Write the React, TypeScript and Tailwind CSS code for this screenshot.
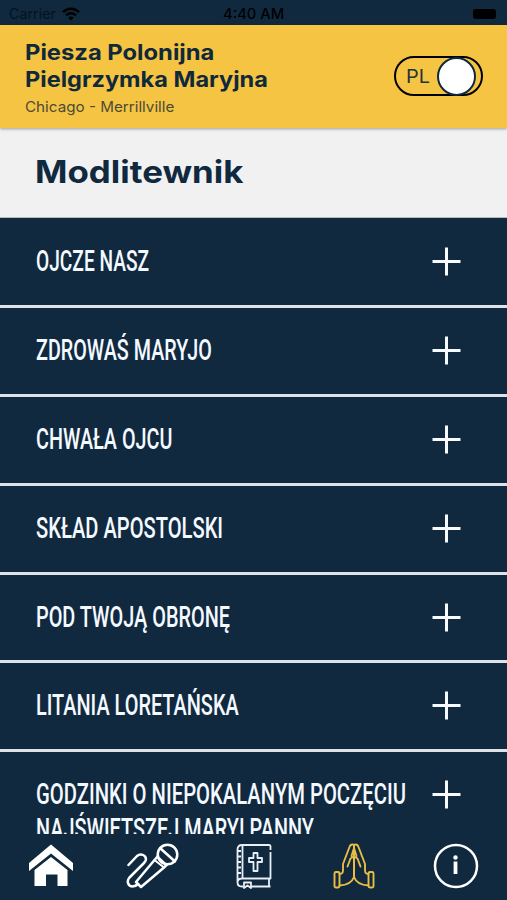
import { useLayoutEffect, useRef, useState } from "react";

type FitTextProps = { text: string; width: number; className?: string };

/** Single line of text whose glyphs are condensed or expanded to a given width. */
function FitText({ text, width, className = "" }: FitTextProps) {
  const ref = useRef<HTMLSpanElement>(null);
  const [scale, setScale] = useState(1);
  useLayoutEffect(() => {
    if (ref.current) setScale(width / ref.current.offsetWidth);
  }, [text, width]);
  return (
    <span className={`block ${className}`} style={{ width }}>
      <span
        ref={ref}
        className="inline-block origin-left whitespace-nowrap"
        style={{ transform: `scaleX(${scale})` }}
      >
        {text}
      </span>
    </span>
  );
}

type Line = { text: string; width: number };

const prayers: Line[][] = [
  [{ text: "OJCZE NASZ", width: 113 }],
  [{ text: "ZDROWAŚ MARYJO", width: 176 }],
  [{ text: "CHWAŁA OJCU", width: 136 }],
  [{ text: "SKŁAD APOSTOLSKI", width: 187 }],
  [{ text: "POD TWOJĄ OBRONĘ", width: 194 }],
  [{ text: "LITANIA LORETAŃSKA", width: 203 }],
  [
    { text: "GODZINKI O NIEPOKALANYM POCZĘCIU", width: 370 },
    { text: "NAJŚWIĘTSZEJ MARYI PANNY", width: 278 },
  ],
];

function StatusBar() {
  return (
    <div className="grid h-[25px] shrink-0 grid-cols-3 items-center bg-[#10293f] pt-[3px] pr-[9px] pl-[9px] text-black">
      <div className="flex items-center gap-[6px]">
        <FitText text="Carrier" width={47} className="text-[14px] leading-5 text-[#06111b]" />
        <svg width="18" height="14" viewBox="0 0 18 14" fill="none" stroke="#000" strokeWidth="2.5">
          <path d="M1 5.2C5.5.6 12.500.6 17 5.200" />
          <path d="M4 8.300C6.800 5.500 11.200 5.500 14 8.300" />
          <path d="M9 13.500 6.200 10.700C7.800 9.200 10.200 9.200 11.800 10.700Z" fill="#000" stroke="none" />
        </svg>
      </div>
      <div className="flex justify-center">
        <FitText text="4:40 AM" width={61} className="text-[14px] leading-5 font-medium" />
      </div>
      <div className="flex justify-end">
        <div className="mr-[2px] h-[10px] w-[23px] rounded-[3px] bg-black" />
      </div>
    </div>
  );
}

function LanguageSwitch() {
  return (
    <div className="mt-[31px] flex h-[40px] w-[89px] items-center justify-between rounded-full border-[2.5px] border-black pr-[5px] pl-[10px]">
      <FitText text="PL" width={24} className="pt-[2px] text-[19px] leading-6 text-[#243338]" />
      <div className="h-[39px] w-[39px] shrink-0 rounded-full border-2 border-[#10293f] bg-white" />
    </div>
  );
}

function Plus() {
  return (
    <svg className="mt-[28px] shrink-0" width="29" height="29" viewBox="0 0 29 29" stroke="#f7fbff" strokeWidth="3">
      <path d="M14.500.5v28M.5 14.500h28" />
    </svg>
  );
}

function PrayerRow({ lines }: { lines: Line[] }) {
  return (
    <div className="flex min-h-[88.8px] shrink-0 items-start justify-between border-t-[3px] border-[#dce2e8] pr-[46px] pl-[35.5px] first:min-h-[88.3px] first:border-t first:border-[#b4bbc1] first:pt-[1px]">
      <div className="pt-[25px]">
        {lines.map((l) => (
          <FitText
            key={l.text}
            text={l.text}
            width={l.width}
            className="font-['Roboto','Noto_Sans',sans-serif] text-[29.5px] leading-[35px] font-medium text-[#f4f9ff]"
          />
        ))}
      </div>
      <Plus />
    </div>
  );
}

function HomeIcon() {
  return (
    <svg width="46" height="44" viewBox="0 0 46 44" fill="#fff">
      <path d="M23 1.500 45 20v8L23 10.500 1 28v-8Z" />
      <path d="M23 14 39.500 27v16H29.500V31.500H18V43H6.500V27Z" />
    </svg>
  );
}

function MicrophoneIcon() {
  return (
    <svg className="ml-[52px]" width="54" height="46" viewBox="0 0 54 46" fill="none" stroke="#fff" strokeWidth="2.500" strokeLinecap="round" strokeLinejoin="round">
      <circle cx="41.500" cy="11.500" r="9.800" />
      <path d="M34 5 49 18.500" />
      <path d="M32 13 28.500 17 10 39 15 44 38 24.500 41 21.500" />
      <path d="M28.500 17 38 24.500M31.500 13.500 40 21.500" strokeWidth="2" />
      <path d="M2.500 22 11 13C15 9.500 20.500 12.500 19.800 17 19.500 18.500 18.500 19.500 17.500 20.500L3.500 34.500C0 38.500 2.500 43.500 6.500 43.500 9.500 43.500 10.500 42.500 12 41" />
    </svg>
  );
}

function BibleIcon() {
  return (
    <svg className="ml-[56px]" width="36" height="46" viewBox="0 0 36 46" fill="none" stroke="#e8f0f6" strokeWidth="1.800" strokeLinejoin="round">
      <path d="M34.500 7V3.500Q34.500 2 33 2H6Q1.500 2 1.500 6.500V39M34.500 9V35.500H6Q1.500 35.500 1.500 39.500T6 43.500H7M15 43.500H34.500M33 35.500V43.500M6.500 2V35" />
      <path d="M1.500 8H5M1.500 13.500H5M1.500 19H5M1.500 24.500H5M1.500 30H5" />
      <path d="M8 39.500H15V45L11.500 42.500 8 45Z" />
      <path d="M17.500 10H21.500V15H26V19H21.500V28H17.500V19H13V15H17.500Z" />
    </svg>
  );
}

function PrayingHandsIcon() {
  return (
    <svg className="ml-[61px]" width="42" height="46" viewBox="0 0 42 46" fill="none" stroke="#e8bd45" strokeWidth="1.900" strokeLinecap="round" strokeLinejoin="round">
      {[false, true].map((flip) => (
        <g key={String(flip)} transform={flip ? "translate(42 0) scale(-1 1)" : undefined}>
          <rect x="1.500" y="29" width="5" height="15.500" rx="1.500" />
          <path d="M6.500 31 8.500 30.500Q10 30 10 27.500V21L16.500 4Q17.500 1 20 1.500L21 2V34Q18 42 6.500 42.500" />
          <path d="M21 5 18.500 13M21 13.500 17.500 15.500 14.500 23.500M21 14V32" />
        </g>
      ))}
    </svg>
  );
}

function InfoIcon() {
  return (
    <svg className="ml-[58px]" width="46" height="46" viewBox="0 0 46 46" fill="none" stroke="#fff">
      <circle cx="23" cy="23" r="21" strokeWidth="2.500" />
      <path d="M22.500 18.500V31" strokeWidth="3.800" />
      <circle cx="22.500" cy="14.500" r="2.200" fill="#fff" stroke="none" />
    </svg>
  );
}

export default function App() {
  return (
    <div className="flex h-[900px] w-[507px] flex-col overflow-hidden bg-[#10293f] font-['Inter','Noto_Sans',sans-serif]">
      <StatusBar />
      <header className="z-10 flex h-[103px] shrink-0 items-start justify-between bg-[#f5c443] pr-[24px] pl-[25px] shadow-[0_1px_3px_rgba(0,0,0,0.35)]">
        <div className="pt-[14px]">
          <h1 className="text-[21.5px] leading-[27px] font-bold text-[#10293a]">
            <FitText text="Piesza Polonijna" width={189} />
            <FitText text="Pielgrzymka Maryjna" width={243} />
          </h1>
          <FitText text="Chicago - Merrillville" width={149} className="pt-[1px] text-[14.5px] leading-[26px] text-[#4b4c35]" />
        </div>
        <LanguageSwitch />
      </header>
      <div className="h-[89px] shrink-0 bg-[#f1f1f1] pt-[24px] pl-[35px]">
        <FitText text="Modlitewnik" width={208} className="text-[31px] leading-10 font-bold text-[#10293f]" />
      </div>
      <main className="flex min-h-0 flex-1 flex-col overflow-hidden">
        {prayers.map((lines) => (
          <PrayerRow key={lines[0].text} lines={lines} />
        ))}
      </main>
      <nav className="flex h-[66px] shrink-0 items-start bg-[#10293f] pt-[9px] pl-[28px]">
        <HomeIcon />
        <MicrophoneIcon />
        <BibleIcon />
        <PrayingHandsIcon />
        <InfoIcon />
      </nav>
    </div>
  );
}
